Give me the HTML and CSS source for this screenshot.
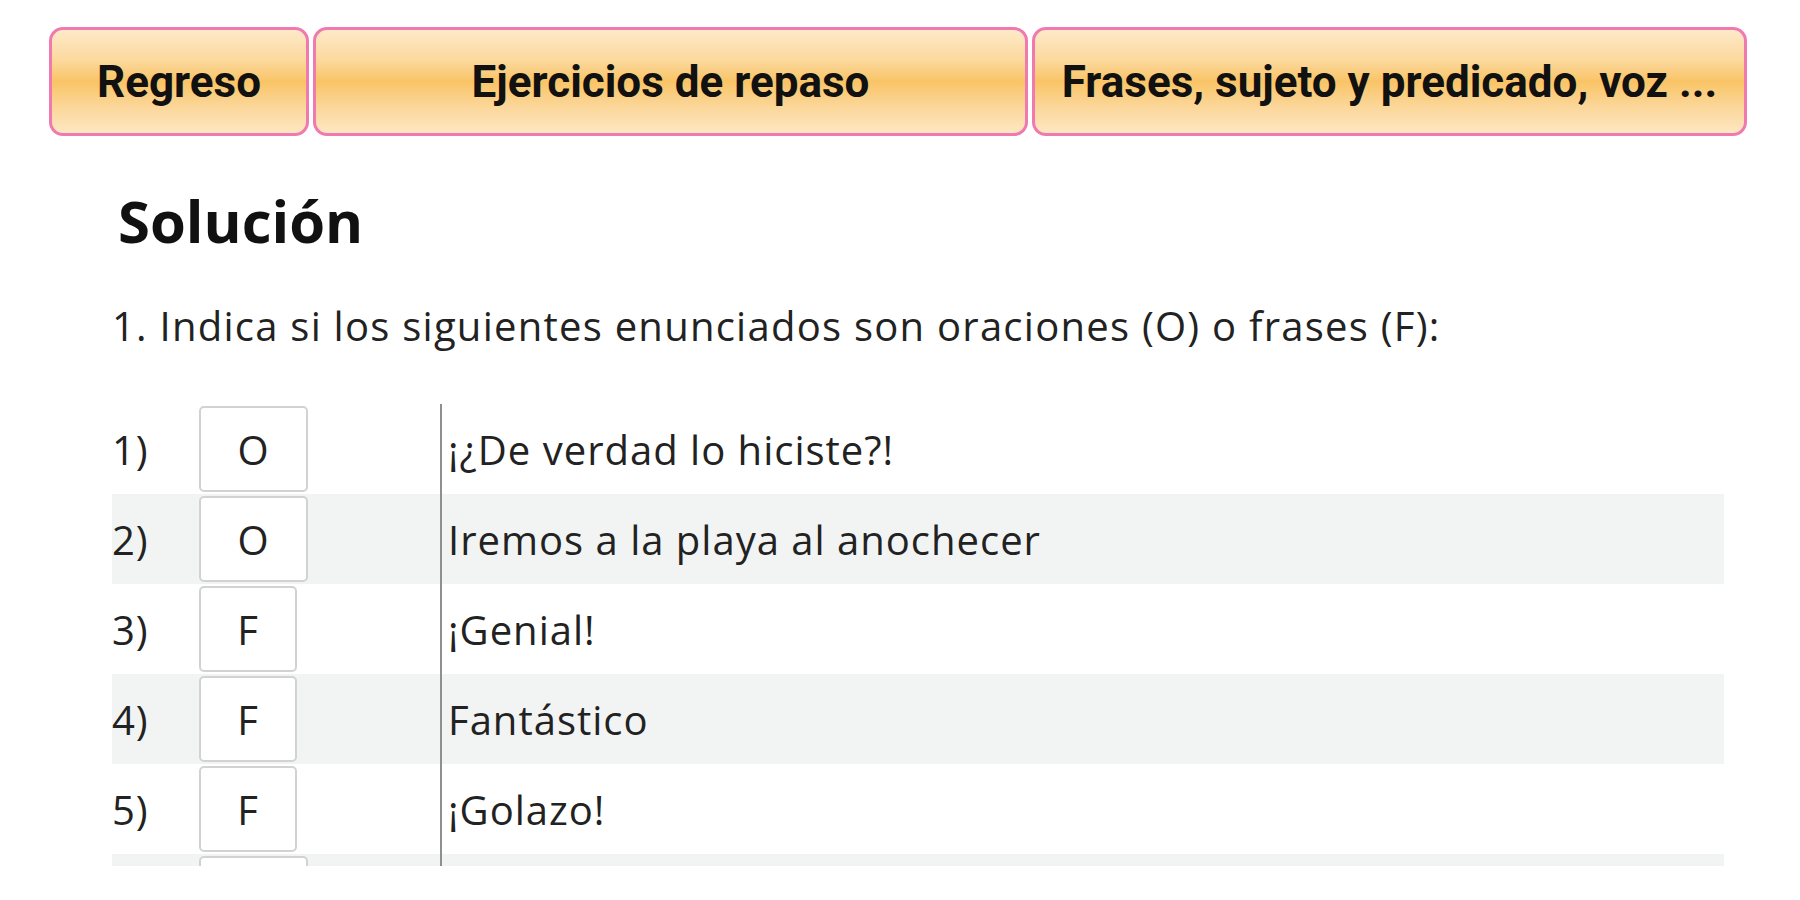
FILE: index.html
```html
<!DOCTYPE html>
<html lang="es">
  <head>
    <meta charset="UTF-8" />
    <meta name="viewport" content="width=device-width, initial-scale=1.0" />
    <title>Solución</title>
    <link rel="stylesheet" href="styles.css">
  </head>
  <body>
    <!-- Barra de navegación -->
    <nav class="nav">
      <a class="nav-btn nav-back" href="#">Regreso</a>
      <a class="nav-btn nav-wide" href="#">Ejercicios de repaso</a>
      <a class="nav-btn nav-wide" href="#">Frases, sujeto y predicado, voz ...</a>
    </nav>

    <main class="content">
      <h1 class="title">Solución</h1>
      <p class="question">1. Indica si los siguientes enunciados son oraciones (O) o frases (F):</p>

      <div class="table-wrap">
        <table class="answers">
          <tr>
            <td class="num">1)</td>
            <td class="cell-box"><span class="box box-o">O</span></td>
            <td class="sentence">¡¿De verdad lo hiciste?!</td>
          </tr>
          <tr>
            <td class="num">2)</td>
            <td class="cell-box"><span class="box box-o">O</span></td>
            <td class="sentence">Iremos a la playa al anochecer</td>
          </tr>
          <tr>
            <td class="num">3)</td>
            <td class="cell-box"><span class="box box-f">F</span></td>
            <td class="sentence">¡Genial!</td>
          </tr>
          <tr>
            <td class="num">4)</td>
            <td class="cell-box"><span class="box box-f">F</span></td>
            <td class="sentence">Fantástico</td>
          </tr>
          <tr>
            <td class="num">5)</td>
            <td class="cell-box"><span class="box box-f">F</span></td>
            <td class="sentence">¡Golazo!</td>
          </tr>
          <tr class="row-cut">
            <td class="num"></td>
            <td class="cell-box"><span class="box box-o"></span></td>
            <td class="sentence"></td>
          </tr>
        </table>
      </div>
    </main>
  </body>
</html>
```

FILE: styles.css
```css
/* Reset minimal */
* {
  margin: 0;
  padding: 0;
  box-sizing: border-box;
}

body {
  background: #fff;
  color: #111;
  font-family: "Open Sans", sans-serif;
}

/* Barra de botones */
.nav {
  display: flex;
  gap: 4px;
  padding: 27px 0 0 49px;
}

.nav-btn {
  display: block;
  height: 109px;
  line-height: 105px;
  border: 3px solid #f07ab0;
  border-radius: 14px;
  background: linear-gradient(to bottom, #fde9c9 0%, #fcd89c 30%, #f9c466 50%, #fbd595 72%, #fde7c2 100%);
  color: #111;
  font-family: Roboto, sans-serif;
  font-weight: 700;
  font-size: 44px;
  text-align: center;
  text-decoration: none;
  white-space: nowrap;
  overflow: hidden;
  text-overflow: ellipsis;
  padding: 0 10px;
}

.nav-back {
  width: 260px;
}

.nav-wide {
  width: 715px;
}

/* Contenu */
.content {
  padding: 0 76px 0 112px;
}

.title {
  font-size: 58px;
  font-weight: 700;
  line-height: 1;
  margin: 56px 0 0 6px;
}

.question {
  font-size: 40px;
  letter-spacing: 1.25px;
  line-height: 1;
  margin-top: 56px;
  color: #222;
}

/* Tableau des réponses */
.table-wrap {
  margin-top: 58px;
  height: 462px;
  overflow: hidden;
}

.answers {
  width: 100%;
  border-collapse: collapse;
  font-size: 40px;
  letter-spacing: 1px;
  color: #222;
}

.answers tr {
  height: 90px;
}

.answers tr:nth-child(even) {
  background: #f2f4f4;
}

.num {
  width: 87px;
  vertical-align: middle;
}

.cell-box {
  width: 242px;
  border-right: 2px solid #8f8f8f;
  vertical-align: middle;
}

.box {
  display: flex;
  align-items: center;
  justify-content: center;
  height: 86px;
  border: 2px solid #d2d2d2;
  border-radius: 5px;
  background: #fff;
}

.box-o {
  width: 109px;
}

.box-f {
  width: 98px;
}

.sentence {
  padding-left: 6px;
  vertical-align: middle;
}
```
